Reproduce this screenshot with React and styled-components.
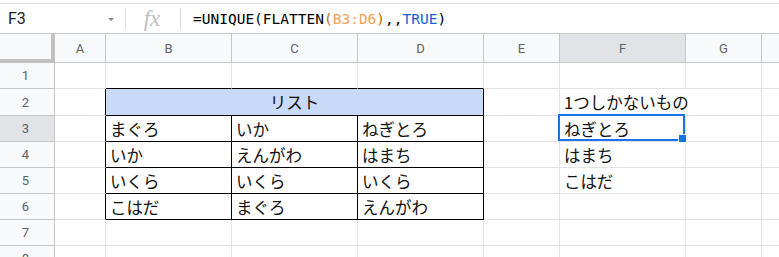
import React from "react";
import styled, { createGlobalStyle } from "styled-components";

const GlobalStyle = createGlobalStyle`
  html, body {
    margin: 0;
    padding: 0;
    background: #ffffff;
    overflow: hidden;
  }
`;

const Page = styled.div`
  width: 779px;
  height: 257px;
  overflow: hidden;
  background: #ffffff;
  font-family: "Noto Sans CJK JP", sans-serif;
`;

const FormulaBar = styled.div`
  margin-top: 3px;
  height: 29px;
  border-top: 1px solid #e0e0e0;
  border-bottom: 1px solid #c4c7c5;
  display: flex;
  align-items: center;
`;

const NameBox = styled.div`
  width: 125px;
  display: flex;
  align-items: center;
  justify-content: space-between;
  padding: 0 11px 0 8px;
  box-sizing: border-box;
  font-family: Roboto, "Liberation Sans", sans-serif;
  font-size: 16px;
  color: #202124;
`;

const Caret = styled.span`
  width: 0;
  height: 0;
  border-left: 3px solid transparent;
  border-right: 3px solid transparent;
  border-top: 3px solid #80868b;
  margin-top: 2px;
`;

const Divider = styled.div`
  width: 1px;
  height: 22px;
  background: #dadce0;
`;

const FxBox = styled.div`
  width: 54px;
  text-align: center;
  font-family: "Liberation Serif", serif;
  font-style: italic;
  font-size: 23px;
  color: #c0c0c0;
  line-height: 1;
  padding-right: 2px;
  box-sizing: border-box;
`;

const Formula = styled.div`
  padding-left: 12px;
  font-family: "DejaVu Sans Mono", "Liberation Mono", monospace;
  font-size: 14.5px;
  color: #000000;
  white-space: nowrap;
`;

const Tok = styled.span`
  color: ${(p) => p.$color || "#000000"};
`;

const Grid = styled.div`
  display: grid;
  grid-template-columns: 55px 51px 126px 126px 126px 76px 126px 76px 100px;
  grid-template-rows: 29px 26px 27px 26px 26px 26px 26px 26px 26px;
`;

const Corner = styled.div`
  background: #f8f9fa;
  box-sizing: border-box;
  border-right: 4px solid #c0c0c0;
  border-bottom: 4px solid #c0c0c0;
`;

const ColHead = styled.div`
  box-sizing: border-box;
  background: ${(p) => (p.$active ? "#e1e3e6" : "#f8f9fa")};
  border-right: 1px solid #c4c7c5;
  border-bottom: 1px solid #c4c7c5;
  display: flex;
  align-items: center;
  justify-content: center;
  font-family: Roboto, "Liberation Sans", sans-serif;
  font-size: 13px;
  color: #5f6368;
`;

const RowHead = styled(ColHead)`
  padding-right: 3px;
`;

const Cell = styled.div`
  position: relative;
  box-sizing: border-box;
  background: ${(p) => p.$fill || "transparent"};
  border-right: 1px solid
    ${(p) => (p.$rb ? "#000000" : p.$open ? "transparent" : "#e2e3e3")};
  border-bottom: 1px solid ${(p) => (p.$bb ? "#000000" : "#e2e3e3")};
  grid-column: span ${(p) => p.$span || 1};
  display: flex;
  align-items: center;
  justify-content: ${(p) => (p.$center ? "center" : "flex-start")};
  padding: 0 4px;
  font-size: 16.5px;
  color: #111111;
  white-space: nowrap;
  overflow: visible;
`;

const Selection = styled.div`
  position: absolute;
  left: -2px;
  top: -2px;
  right: 0;
  bottom: 0;
  border: 2px solid #1a73e8;
  z-index: 2;
  pointer-events: none;
`;

const Handle = styled.div`
  position: absolute;
  right: -4px;
  bottom: -4px;
  width: 7px;
  height: 7px;
  background: #1a73e8;
  border: 1px solid #ffffff;
`;

const cols = ["A", "B", "C", "D", "E", "F", "G", ""];

const table = [
  ["まぐろ", "いか", "ねぎとろ"],
  ["いか", "えんがわ", "はまち"],
  ["いくら", "いくら", "いくら"],
  ["こはだ", "まぐろ", "えんがわ"],
];

const uniques = { 2: "1つしかないもの", 3: "ねぎとろ", 4: "はまち", 5: "こはだ" };

const renderRow = (r) => {
  const inTable = r >= 2 && r <= 6;
  const cells = [];
  cells.push(
    <RowHead key="h" $active={r === 3}>
      {r}
    </RowHead>
  );
  cells.push(<Cell key="A" $rb={inTable} />);
  if (r === 2) {
    cells.push(
      <Cell key="BCD" $span={3} $fill="#c9daf8" $center $rb $bb>
        リスト
      </Cell>
    );
  } else if (inTable) {
    table[r - 3].forEach((v, i) =>
      cells.push(
        <Cell key={i} $rb $bb>
          {v}
        </Cell>
      )
    );
  } else {
    [0, 1, 2].forEach((i) => cells.push(<Cell key={i} $bb={r === 1} />));
  }
  cells.push(<Cell key="E" />);
  cells.push(
    <Cell key="F" $open={r === 2}>
      {uniques[r] || ""}
      {r === 3 && (
        <Selection>
          <Handle />
        </Selection>
      )}
    </Cell>
  );
  cells.push(<Cell key="G" />);
  cells.push(<Cell key="H" />);
  return cells;
};

const App = () => {
  return (
    <Page>
      <GlobalStyle />
      <FormulaBar>
        <NameBox>
          F3
          <Caret />
        </NameBox>
        <Divider />
        <FxBox>fx</FxBox>
        <Divider />
        <Formula>
          <Tok>=UNIQUE(FLATTEN</Tok>
          <Tok $color="#c36d00">(</Tok>
          <Tok $color="#f6a05a">B3:D6</Tok>
          <Tok $color="#c36d00">)</Tok>
          <Tok>,,</Tok>
          <Tok $color="#1a5fd0">TRUE</Tok>
          <Tok>)</Tok>
        </Formula>
      </FormulaBar>
      <Grid>
        <Corner />
        {cols.map((c, i) => (
          <ColHead key={i} $active={c === "F"}>
            {c}
          </ColHead>
        ))}
        {[1, 2, 3, 4, 5, 6, 7, 8].map((r) => (
          <React.Fragment key={r}>{renderRow(r)}</React.Fragment>
        ))}
      </Grid>
    </Page>
  );
};

export default App;
